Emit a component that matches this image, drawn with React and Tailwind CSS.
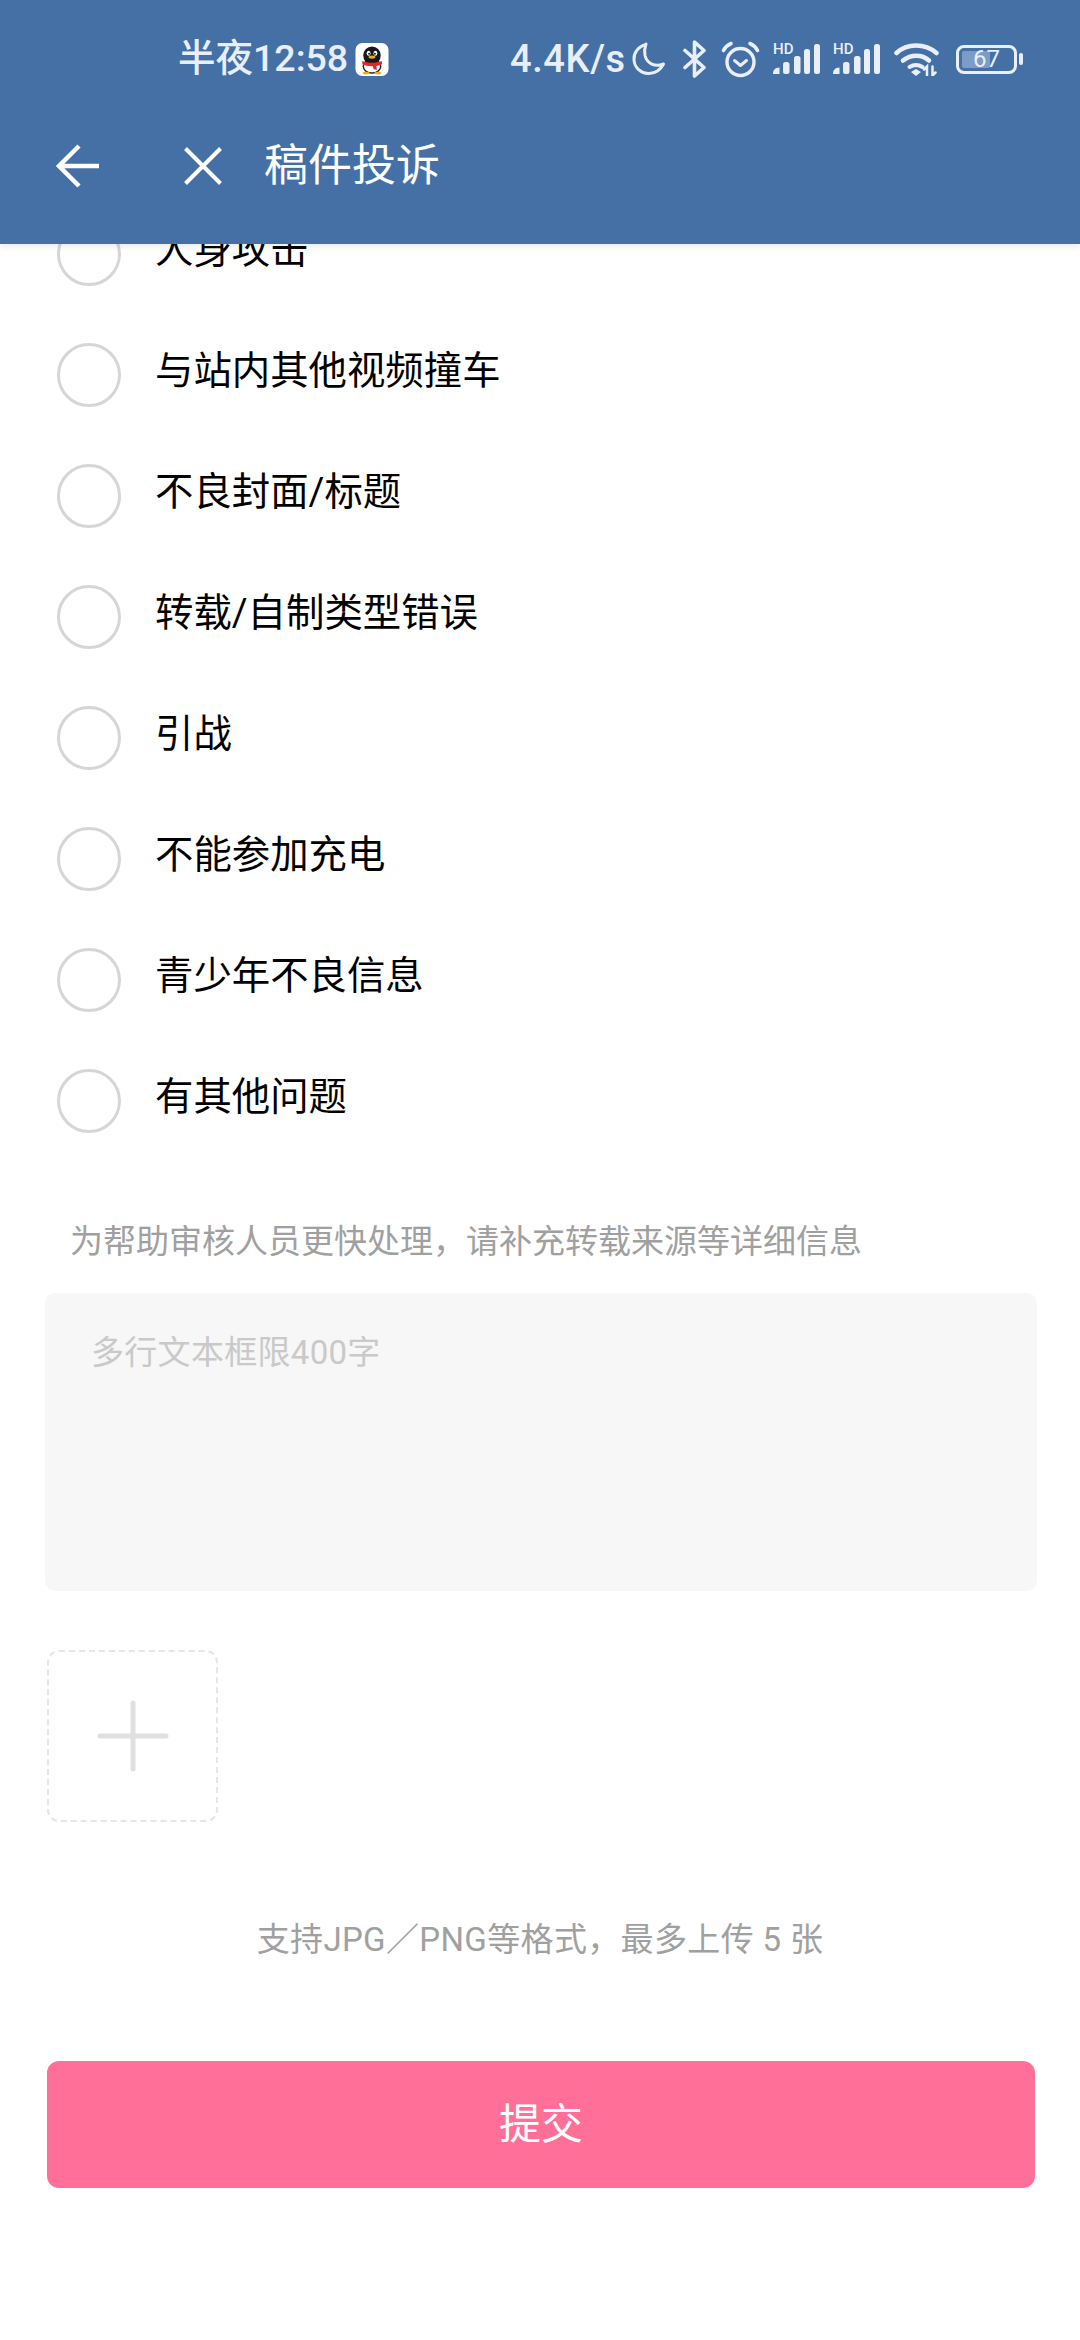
import React from "react";

const OPTIONS = [
  "人身攻击",
  "与站内其他视频撞车",
  "不良封面/标题",
  "转载/自制类型错误",
  "引战",
  "不能参加充电",
  "青少年不良信息",
  "有其他问题",
];

function QQBadge() {
  return (
    <svg width="34" height="33" viewBox="0 0 34 34" className="shrink-0">
      <rect width="34" height="34" rx="7" fill="#fff" />
      <ellipse cx="17" cy="24" rx="9" ry="7" fill="#fff" stroke="#222" strokeWidth="1.5" />
      <ellipse cx="17" cy="13" rx="9" ry="9.5" fill="#17171c" />
      <ellipse cx="13.5" cy="10.5" rx="2" ry="2.6" fill="#fff" />
      <ellipse cx="20.5" cy="10.5" rx="2" ry="2.6" fill="#fff" />
      <circle cx="14" cy="11" r="1" fill="#111" />
      <circle cx="20" cy="11" r="1" fill="#111" />
      <ellipse cx="17" cy="14.5" rx="3.6" ry="1.7" fill="#f3a91e" />
      <path d="M7 18.5c6 2.5 14 2.5 20 0l.5 3.5c-2 1-4 1.4-6 1.7l.5 4-3.5-1-.5-2.8c-4 .2-8-.4-11-1.9z" fill="#e3262e" />
      <ellipse cx="11" cy="31" rx="3.5" ry="1.4" fill="#f3a91e" />
      <ellipse cx="23" cy="31" rx="3.5" ry="1.4" fill="#f3a91e" />
    </svg>
  );
}

function Moon() {
  return (
    <svg width="34" height="34" viewBox="0 0 34 34" fill="none" stroke="#e9effa" strokeWidth="3">
      <path d="M14 2.500C6 4.500 1.500 11 2 18c.6 8 7.500 14 15 13.500 6-.3 11.500-3.500 14.500-9.500-8.500 3.500-16.500-.5-18.500-8.500-.7-3.500-.5-7.500 1-11.500z" strokeLinejoin="round" />
    </svg>
  );
}

function Bluetooth() {
  return (
    <svg width="25" height="38" viewBox="0 0 25 38" fill="none" stroke="#e9effa" strokeWidth="3.6" strokeLinecap="round" strokeLinejoin="round">
      <path d="M3 10.500l19 17-9.500 8.500V2l9.500 8.500L3 27.500" />
    </svg>
  );
}

function Alarm() {
  return (
    <svg width="39" height="37" viewBox="0 0 39 37" fill="none" stroke="#e9effa" strokeLinecap="round" strokeLinejoin="round">
      <circle cx="19.500" cy="21" r="13.500" strokeWidth="3.4" />
      <path d="M13.500 19.500l6 5 6-5" strokeWidth="3" />
      <path d="M2.500 9.500c1.500-3 4-5.500 7.500-7M36.500 9.500c-1.500-3-4-5.500-7.500-7" strokeWidth="3.600" />
    </svg>
  );
}

// Signal strength bars with the small HD mark above the left side
function Signal() {
  return (
    <span className="relative block h-[30px] w-[47px]">
      <span className="absolute left-0 top-[-1px] text-[15px] font-medium leading-[13px] text-[#e9effa]">HD</span>
      <svg width="47" height="30" viewBox="0 0 47 30" fill="#e9effa" className="absolute inset-0">
        <path d="M0 29.500c0-3 2-6 6.500-6v6.500H0z" />
        <rect x="10" y="18" width="6.500" height="12" rx="2.500" />
        <rect x="21" y="12" width="6.500" height="18" rx="2.500" />
        <rect x="31" y="5" width="6" height="25" rx="2.500" />
        <rect x="41" y="0" width="6" height="30" rx="2.500" />
      </svg>
    </span>
  );
}

function Wifi() {
  return (
    <svg width="45" height="34" viewBox="0 0 45 34" fill="none" stroke="#e9effa" strokeWidth="4.500" strokeLinecap="round">
      <path d="M2.500 11C13 1 31 1 42.500 11" />
      <path d="M9 18.500c8-6.500 19-6.500 26 0" />
      <path d="M15.500 25c4-2.500 9-2.500 13 0" strokeWidth="4" />
      <path d="M17 30l5-3 5 3-5 4z" fill="#e9effa" stroke="none" />
      <path d="M33 33.500v-9l-3 3M38.500 24.500v9l3-3" strokeWidth="2.500" />
    </svg>
  );
}

function Battery() {
  return (
    <span className="flex items-center">
      <span className="relative flex h-[29px] w-[61px] items-center justify-center overflow-hidden rounded-[8px] border-[3px] border-[#e9effa]">
        <span className="absolute bottom-[3px] left-[3px] top-[3px] w-[28px] rounded-[2px] bg-[#7c9bc5]" />
        <span className="relative text-[24px] leading-none text-[#e9effa]">67</span>
      </span>
      <span className="ml-[2px] h-[12px] w-[4px] rounded-full bg-[#e9effa]" />
    </span>
  );
}

function StatusBar() {
  return (
    <div className="flex h-[116px] items-center pl-[178px] pt-[2px] text-[#e9effa]">
      <span className="w-[177px] shrink-0 text-[37.5px] font-medium leading-none">半夜12:58</span>
      <QQBadge />
      <span className="ml-[121px] w-[122px] shrink-0 text-[38px] font-medium leading-none tracking-[0.6px]">4.4K/s</span>
      <span className="flex"><Moon /></span>
      <span className="ml-[16px] flex"><Bluetooth /></span>
      <span className="ml-[14px] flex"><Alarm /></span>
      <span className="ml-[13px] flex"><Signal /></span>
      <span className="ml-[13px] flex"><Signal /></span>
      <span className="ml-[14px] flex"><Wifi /></span>
      <span className="ml-[17px] flex"><Battery /></span>
    </div>
  );
}

function NavBar() {
  return (
    <div className="flex h-[100px] items-center text-white">
      <svg width="44" height="44" viewBox="0 0 44 44" fill="none" stroke="#fff" strokeWidth="4.500" className="ml-[55px] shrink-0">
        <path d="M44 22H4M24 2L4 22l20 20" />
      </svg>
      <svg width="38" height="38" viewBox="0 0 38 38" fill="none" stroke="#fff" strokeWidth="4" className="ml-[85px] shrink-0">
        <path d="M1.500 1.500l35 35M36.500 1.500l-35 35" />
      </svg>
      <span className="ml-[42px] text-[44px] leading-[54px]">稿件投诉</span>
    </div>
  );
}

function OptionRow({ label }) {
  return (
    <div className="flex h-[121px] items-center pl-[57px]">
      <span className="h-[64px] w-[64px] rounded-full border-[3px] border-[#d6d6d6]" />
      <span className="ml-[34px] -translate-y-[4px] text-[38.4px] leading-[50px] text-black">{label}</span>
    </div>
  );
}

export default function App() {
  return (
    <div
      className="h-[2340px] w-[1080px] overflow-hidden bg-white"
      style={{ fontFamily: 'Roboto, "Noto Sans CJK SC", sans-serif' }}
    >
      <header className="relative z-10 h-[244px] bg-[#4570a6] shadow-[0_3px_6px_rgba(0,0,0,0.08)]">
        <StatusBar />
        <NavBar />
      </header>

      <main className="-mt-[51px]">
        {OPTIONS.map((label) => (
          <OptionRow key={label} label={label} />
        ))}

        <p className="ml-[70px] mt-[59px] text-[33px] leading-[44px] text-[#a0a0a0]">
          为帮助审核人员更快处理，请补充转载来源等详细信息
        </p>

        <div className="ml-[45px] mt-[29px] h-[298px] w-[992px] rounded-[10px] bg-[#f7f7f7] px-[46px] pt-[38px] text-[33px] leading-[44px] tracking-[0.3px] text-[#c9c9c9]">
          多行文本框限400字
        </div>

        <div className="ml-[47px] mt-[59px] flex h-[172px] w-[171px] items-center justify-center rounded-[12px] border-2 border-dashed border-[#e6e6e6]">
          <svg width="72" height="72" viewBox="0 0 72 72" stroke="#e0e0e0" strokeWidth="5" strokeLinecap="round">
            <path d="M36 3v66M3 36h66" />
          </svg>
        </div>

        <p className="mt-[96px] text-center text-[33px] leading-[44px] tracking-[0.35px] text-[#a0a0a0]">
          支持JPG／PNG等格式，最多上传 5 张
        </p>

        <button className="ml-[47px] mt-[99px] flex h-[127px] w-[988px] items-center justify-center rounded-[12px] bg-[#ff6f98] text-[42px] text-white">
          提交
        </button>
      </main>
    </div>
  );
}
